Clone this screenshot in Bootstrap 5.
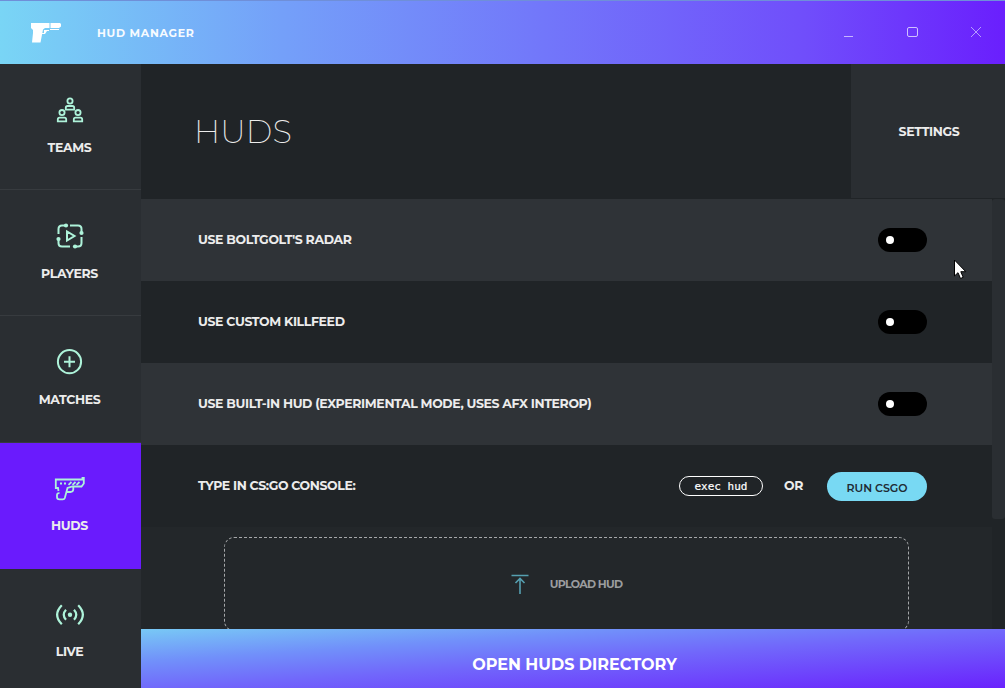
<!DOCTYPE html>
<html lang="en">
<head>
<meta charset="utf-8">
<title>HUD Manager</title>
<link href="https://cdn.jsdelivr.net/npm/bootstrap@5.3.0/dist/css/bootstrap.min.css" rel="stylesheet">
<style>
body{font-family:Montserrat,Inter,sans-serif;background:#202427;color:#ececec;font-weight:700;font-size:12.5px;letter-spacing:-.37px;line-height:16px}
.titlebar{height:64px;background:linear-gradient(to right,#79d5f5 0%,#74a0f9 28%,#704efb 80%,#6a1ffd 100%);border-top:1px solid #6f8fd8}
.gun{margin-left:30px;width:32px}
.brand{margin-left:35px;font-size:11px;letter-spacing:.7px;color:#f7fbff}
.winbtns{margin-right:23px;gap:51px}
.side{width:141px;background:#2a2e32}
.side-item{height:126.2px;flex:none;border-bottom:1px solid #373b3f;padding:31px 2px 0 0}
.side-item svg{width:32px;height:32px;display:block;margin-bottom:13px}
.side-item.active{background:#6a1bfd;border-color:#6a1bfd}
.side-item.active svg,.side-item.live svg{margin-bottom:12px}
.ic{fill:none;stroke:#aef3da;stroke-width:2}
.ic.fine{stroke-width:1.8}
.page-head{height:135px}
.page-title{font-size:32px;font-weight:200;line-height:40px;padding-left:53px;letter-spacing:.2px;margin:0}
.settings{width:154px;height:134px;background:#2a2e32;padding:1px 0 0 2px}
.opts{width:851px}
.opt{height:82px;padding:0 65px 0 57px;flex:none}
.opt-light{background:#2f3337}
.toggle{width:49px;height:24px;border-radius:12px;background:#000;padding-left:8px}
.toggle i{width:8px;height:8px;border-radius:50%;background:#fff}
.thumb{width:13px;height:320px;background:#2a2e32;border-radius:3px}
.cmd{width:84px;height:20px;border:1px solid #fff;border-radius:10px;font:11px/19px "DejaVu Sans Mono",monospace;letter-spacing:0;color:#fff;-webkit-text-stroke:.2px #fff;margin-right:21px}
.run{width:100px;height:29px;border:0;border-radius:15px;background:#78d9f3;color:#202b33;font-size:11px;font-weight:600;letter-spacing:-.05px;margin-top:1px;padding:2px 0 0}
.upload-wrap{background:#23272a;height:102px;padding:10px 83px 0}
.upload{height:94px;border:1px dashed #a5a7a9;border-radius:10px;color:#9b9d9f;font-size:11px;letter-spacing:-.7px}
.open{height:59px;border:0;background:linear-gradient(to right bottom,#78c9f5,#7190fa 28%,#7167fb 52%,#6a22fd);color:#fff;font-size:16px;font-weight:700;letter-spacing:0;padding:13px 0 0 3px}
.cursor{left:953px;top:259px}
</style>
</head>
<body class="vh-100 overflow-hidden d-flex flex-column position-relative">
<header class="titlebar d-flex align-items-center flex-shrink-0">
  <svg class="gun" height="22" viewBox="0 0 32 22" fill="#fff"><path d="M1 1H19.500V6H15L13 7.500L10.500 20.500H2L3 11V8L1 6ZM20.500 1H30L31 2V4.500L29 6H20.500ZM20 7H29V8H20ZM14 8H19V9H17L15 12H12V11H14Z"/></svg>
  <span class="brand">HUD MANAGER</span>
  <div class="winbtns d-flex ms-auto align-items-center">
    <svg width="13" height="13" viewBox="0 0 13 13" stroke="#c7b5ff" fill="none"><path d="M3 10.500H12"/></svg>
    <svg width="13" height="13" viewBox="0 0 13 13" stroke="#d0c0ff" fill="none"><rect x="2.500" y="1.500" width="10" height="9" rx="1.500"/></svg>
    <svg width="13" height="13" viewBox="0 0 13 13" stroke="#b69cff" fill="none"><path d="M2 1L12 11M12 1L2 11"/></svg>
  </div>
</header>
<div class="d-flex flex-grow-1 overflow-hidden">
  <nav class="side d-flex flex-column overflow-hidden flex-shrink-0">
    <div class="side-item d-flex flex-column align-items-center">
      <svg class="ic fine" viewBox="0 0 32 32"><circle cx="16" cy="6" r="2.600"/><path d="M11.800 14.700V12.800Q11.800 11 13.600 11H18.400Q20.200 11 20.200 12.800V14.700Z"/><circle cx="8" cy="17.600" r="2.600"/><path d="M3.800 26.300V24.400Q3.800 22.600 5.600 22.600H10.400Q12.200 22.600 12.200 24.400V26.300Z"/><circle cx="24" cy="17.600" r="2.600"/><path d="M19.800 26.300V24.400Q19.800 22.600 21.600 22.600H26.400Q28.200 22.600 28.200 24.400V26.300Z"/></svg>
      <span>TEAMS</span>
    </div>
    <div class="side-item d-flex flex-column align-items-center">
      <svg class="ic" viewBox="0 0 32 32"><path d="M12 4.500H8Q4.500 4.500 4.500 8V13M16 4.500H24Q27.500 4.500 27.500 8V12M27.500 16V22Q27.500 25.500 24 25.500H21M16 25.500H8Q4.500 25.500 4.500 22V18M13 10.500V19.500L20.500 15Z"/><g fill="#aef3da" stroke="none"><circle cx="12" cy="4.500" r="2.100"/><circle cx="27.500" cy="12" r="2.100"/><circle cx="21" cy="25.500" r="2.100"/><circle cx="4.500" cy="18" r="2.100"/></g></svg>
      <span>PLAYERS</span>
    </div>
    <div class="side-item d-flex flex-column align-items-center">
      <svg class="ic" viewBox="0 0 32 32"><circle cx="15.500" cy="14.700" r="11.600"/><path d="M15.500 9.200V20.200M10 14.700H21"/></svg>
      <span>MATCHES</span>
    </div>
    <div class="side-item active d-flex flex-column align-items-center">
      <svg class="ic fine" viewBox="0 0 32 32"><path d="M4.500 17L4 14H1.800V5.500H28.500V3.800H29.800V9.500L27.500 12.500H18.500L13.500 14L10.800 24Q10.300 25.400 9 25.400H5.500Q3 25.400 3 23V21Q3 19 5.500 19.200M19.300 13V15.500Q19 18 16.500 18H13"/><path d="M6 9.500H8M10 9.500H12M14.500 10.800L17.500 8M18.500 10.800L21.500 8M22.500 10.800L25.500 8"/></svg>
      <span>HUDS</span>
    </div>
    <div class="side-item live d-flex flex-column align-items-center">
      <svg class="ic" viewBox="0 0 32 32"><circle cx="16" cy="14.800" r="2.200" fill="#aef3da" stroke="none"/><path stroke-width="2.200" d="M12 9.800Q7.500 14.800 12 19.800M20 9.800Q24.500 14.800 20 19.800M7.800 5.300Q-1.500 14.800 7.800 24.300M24.200 5.300Q33.500 14.800 24.200 24.300"/></svg>
      <span>LIVE</span>
    </div>
  </nav>
  <main class="d-flex flex-column flex-grow-1 overflow-hidden">
    <div class="page-head d-flex justify-content-between flex-shrink-0">
      <h1 class="page-title align-self-center">HUDS</h1>
      <div class="settings d-flex align-items-center justify-content-center">SETTINGS</div>
    </div>
    <div class="d-flex flex-grow-1 overflow-hidden">
      <div class="opts d-flex flex-column">
        <div class="opt opt-light d-flex align-items-center justify-content-between"><span>USE BOLTGOLT'S RADAR</span><span class="toggle d-flex align-items-center"><i></i></span></div>
        <div class="opt d-flex align-items-center justify-content-between"><span>USE CUSTOM KILLFEED</span><span class="toggle d-flex align-items-center"><i></i></span></div>
        <div class="opt opt-light d-flex align-items-center justify-content-between"><span>USE BUILT-IN HUD (EXPERIMENTAL MODE, USES AFX INTEROP)</span><span class="toggle d-flex align-items-center"><i></i></span></div>
        <div class="opt d-flex align-items-center"><span>TYPE IN CS:GO CONSOLE:</span><span class="cmd ms-auto text-center">exec hud</span><span>OR</span><button class="run ms-4">RUN CSGO</button></div>
        <div class="upload-wrap flex-shrink-0">
          <div class="upload d-flex align-items-center justify-content-center">
            <svg width="18" height="20" viewBox="0 0 18 20" fill="none" stroke="#559fb0" stroke-width="1.600" style="margin-right:21px"><path d="M.5 1.500H17.500M9 20V5M4.500 9L9 4.500L13.500 9"/></svg>
            <span>UPLOAD HUD</span>
          </div>
        </div>
      </div>
      <div class="thumb"></div>
    </div>
    <button class="open flex-shrink-0 w-100">OPEN HUDS DIRECTORY</button>
  </main>
</div>
<svg class="cursor position-absolute" width="14" height="21" viewBox="0 0 14 21"><path d="M1.500 1V17L5 13.700L7.500 19.500L10.200 18.300L7.800 12.700H12.800Z" fill="#fff" stroke="#000"/></svg>
<script src="https://cdn.jsdelivr.net/npm/bootstrap@5.3.0/dist/js/bootstrap.bundle.min.js"></script>
</body>
</html>
